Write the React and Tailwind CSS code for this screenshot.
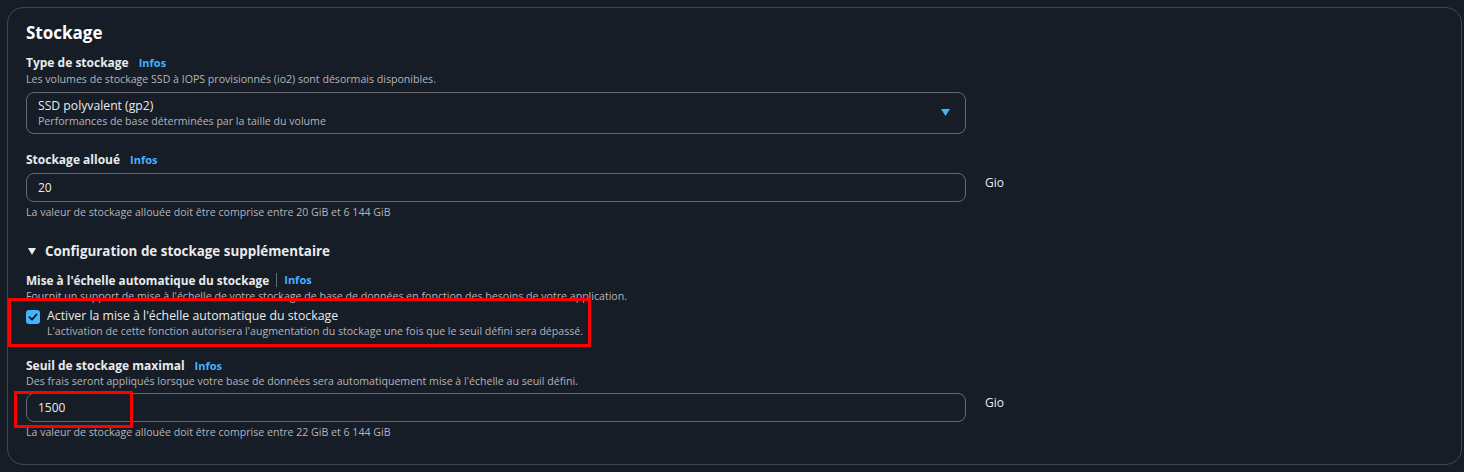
import React from 'react';

const Infos = ({ className = '' }) => (
  <a href="#" className={`text-[11px] font-bold text-[#42b4ff] ${className}`}>Infos</a>
);

const Caret = () => (
  <svg width="9" height="7" viewBox="0 0 9 7">
    <path d="M0 0 H9 L4.5 7 Z" fill="#42b4ff" />
  </svg>
);

const Check = () => (
  <svg width="10" height="10" viewBox="0 0 10 10">
    <path d="M1.5 5.2 L4 7.6 L8.6 2.4" fill="none" stroke="#0f141a" strokeWidth="1.8" strokeLinecap="round" strokeLinejoin="round" />
  </svg>
);

export default function App() {
  return (
    <div className="min-h-screen bg-[#161d26] pl-[7px] pt-[7px] font-['Open_Sans',sans-serif] text-[#dedee3]">
      <div className="relative w-[1455px] rounded-[16px] border border-[#424650] bg-[#161d26] px-[18px] pt-[14px] pb-[25px]">
        {/* Stockage */}
        <h2 className="text-[17px] leading-[22px] font-bold text-white">Stockage</h2>

        {/* Type de stockage */}
        <div className="mt-[11px]">
          <div className="flex items-center gap-[10px]">
            <span className="text-[12px] leading-[16px] font-bold text-[#e9ebed]">Type de stockage</span>
            <Infos />
          </div>
          <p className="text-[10.6px] leading-[14px] text-[#b4b4bb]">
            Les volumes de stockage SSD à IOPS provisionnés (io2) sont désormais disponibles.
          </p>
          <div className="mt-[6px] flex w-[940px] items-center justify-between rounded-[8px] border border-[#656871] pl-[11px] pr-[15px] pt-[5px] pb-[5px]">
            <div>
              <div className="text-[12.2px] leading-[16px] text-[#e9ebed]">SSD polyvalent (gp2)</div>
              <div className="text-[10.6px] leading-[14px] text-[#b4b4bb]">Performances de base déterminées par la taille du volume</div>
            </div>
            <Caret />
          </div>
        </div>

        {/* Stockage alloué */}
        <div className="mt-[18px]">
          <div className="flex items-center gap-[10px]">
            <span className="text-[12px] leading-[16px] font-bold text-[#e9ebed]">Stockage alloué</span>
            <Infos />
          </div>
          <div className="mt-[5px] flex items-start gap-[19px]">
            <div className="flex h-[29px] w-[940px] items-center rounded-[8px] border border-[#656871] px-[11px] text-[12px] text-[#e9ebed]">
              20
            </div>
            <span className="mt-[2px] text-[12px] leading-[16px] text-[#e9ebed]">Gio</span>
          </div>
          <p className="mt-[3px] text-[10.6px] leading-[14px] text-[#b4b4bb]">
            La valeur de stockage allouée doit être comprise entre 20 GiB et 6 144 GiB
          </p>
        </div>

        {/* Configuration supplémentaire */}
        <div className="mt-[22px] flex items-center gap-[9px] text-[13.4px] leading-[20px] font-bold text-[#e9ebed]">
          <svg width="8" height="7" viewBox="0 0 8 7" className="ml-[2px]">
            <path d="M0 0 H8 L4 7 Z" fill="#e9ebed" />
          </svg>
          <span>Configuration de stockage supplémentaire</span>
        </div>

        <div className="mt-[11px]">
          <div className="flex items-center">
            <span className="text-[11.8px] leading-[16px] font-bold text-[#e9ebed]">Mise à l'échelle automatique du stockage</span>
            <span className="mx-[7px] h-[14px] w-px bg-[#5f6b7a]" />
            <Infos />
          </div>
          <p className="text-[10.6px] leading-[14px] text-[#b4b4bb]">
            Fournit un support de mise à l'échelle de votre stockage de base de données en fonction des besoins de votre application.
          </p>
          <div className="mt-[5px] flex items-start gap-[7px]">
            <span className="mt-[2px] flex h-[14px] w-[14px] items-center justify-center rounded-[3px] bg-[#42b4ff]">
              <Check />
            </span>
            <div>
              <div className="text-[12.3px] leading-[16px] text-[#e9ebed]">Activer la mise à l'échelle automatique du stockage</div>
              <div className="text-[10.6px] leading-[14px] text-[#b4b4bb]">
                L'activation de cette fonction autorisera l'augmentation du stockage une fois que le seuil défini sera dépassé.
              </div>
            </div>
          </div>
        </div>

        {/* Seuil de stockage maximal */}
        <div className="mt-[20px]">
          <div className="flex items-center gap-[10px]">
            <span className="text-[12px] leading-[16px] font-bold text-[#e9ebed]">Seuil de stockage maximal</span>
            <Infos />
          </div>
          <p className="text-[10.6px] leading-[14px] text-[#b4b4bb]">
            Des frais seront appliqués lorsque votre base de données sera automatiquement mise à l'échelle au seuil défini.
          </p>
          <div className="mt-[5px] flex items-start gap-[19px]">
            <div className="flex h-[29px] w-[940px] items-center rounded-[8px] border border-[#656871] px-[11px] text-[12px] text-[#e9ebed]">
              1500
            </div>
            <span className="mt-[2px] text-[12px] leading-[16px] text-[#e9ebed]">Gio</span>
          </div>
          <p className="mt-[3px] text-[10.6px] leading-[14px] text-[#b4b4bb]">
            La valeur de stockage allouée doit être comprise entre 22 GiB et 6 144 GiB
          </p>
        </div>

        {/* annotation boxes */}
        <div className="pointer-events-none absolute left-0 top-[290px] h-[49px] w-[583px] border-[3px] border-[#ff0000]" />
        <div className="pointer-events-none absolute left-[6px] top-[383px] h-[37px] w-[119px] border-[3px] border-[#ff0000]" />
      </div>
    </div>
  );
}
